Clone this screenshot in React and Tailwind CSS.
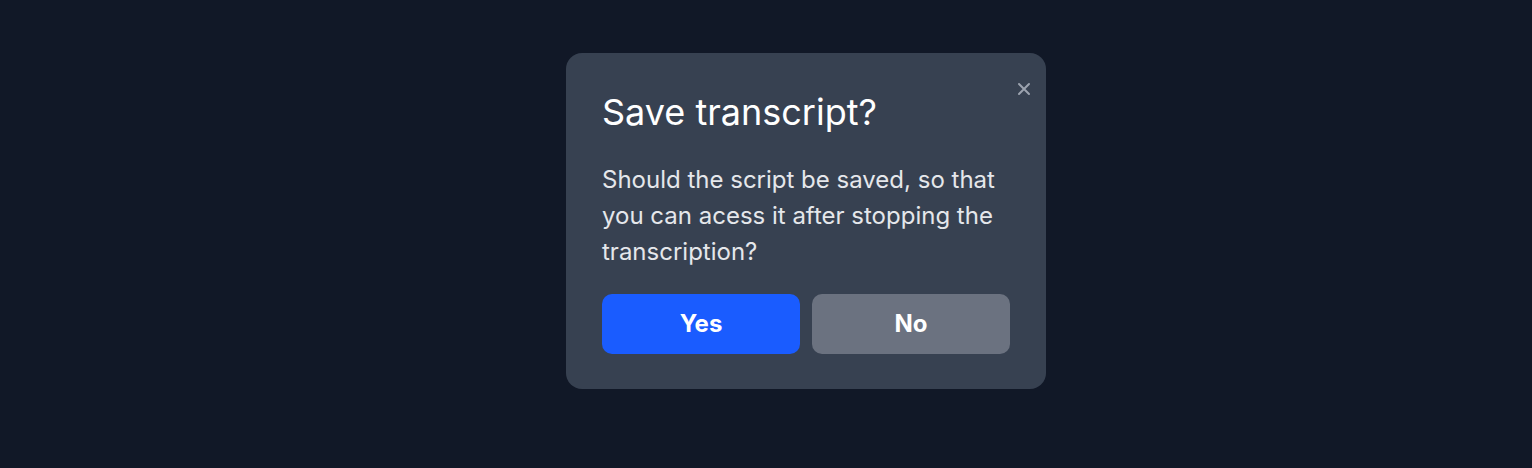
export default function App() {
  return (
    <div
      className="min-h-[468px] w-full bg-[#111827] flex justify-center items-start pt-[53px] pl-[80px]"
      style={{ fontFamily: "Inter, 'Noto Sans', sans-serif" }}
    >
      <div className="relative w-[480px] rounded-2xl bg-[#374151] px-9 pt-9 pb-[35px]">
        {/* close */}
        <button className="absolute right-[15px] top-[29px] flex text-[#9ca3af]">
          <svg width="14" height="14" viewBox="0 0 14 14" fill="none">
            <path d="M2 2L12 12M12 2L2 12" stroke="currentColor" strokeWidth="2" strokeLinecap="round" />
          </svg>
        </button>

        <h2 className="mt-[3px] mb-[30px] text-4xl leading-10 text-white">Save transcript?</h2>
        <p className="text-2xl leading-9 text-[#e5e7eb]">
          Should the script be saved, so that you can acess it after stopping the transcription?
        </p>

        <div className="mt-6 grid grid-cols-2 gap-3">
          <button className="h-[60px] rounded-[10px] bg-[#1a5cff] text-2xl font-bold text-white">
            Yes
          </button>
          <button className="h-[60px] rounded-[10px] bg-[#6b7280] text-2xl font-bold text-white">
            No
          </button>
        </div>
      </div>
    </div>
  );
}
